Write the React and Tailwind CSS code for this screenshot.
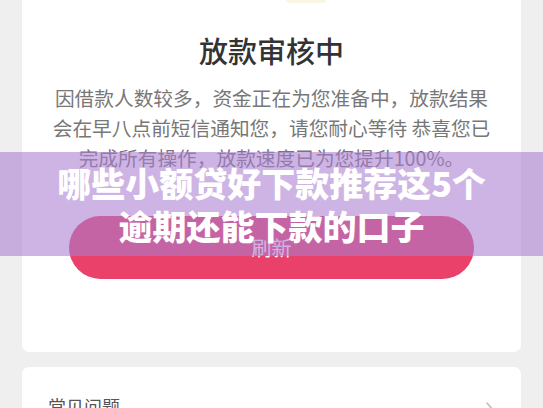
import React from 'react';

const cjk = { fontFamily: '"Noto Sans CJK SC", "Noto Sans", sans-serif' };

function Chevron() {
  return (
    <svg width="12" height="20" viewBox="0 0 12 20" fill="none">
      <polyline points="2,1 10,10 2,19" stroke="#bdbdbd" strokeWidth="1.6" strokeLinecap="round" strokeLinejoin="round" />
    </svg>
  );
}

export default function App() {
  return (
    <div className="relative w-full h-[408px] overflow-hidden bg-[#efefef] px-[22px]" style={cjk}>
      {/* status card */}
      <div className="bg-white rounded-b-[7px] flex flex-col items-center pb-[73px]">
        <div className="ml-[68px] w-[40px] h-[3px] rounded-b-full bg-[#f9f6e6]"></div>
        <h1 className="mt-[29px] text-[29px] leading-[36px] font-medium text-[#333333]">放款审核中</h1>
        <p className="mt-[15px] w-[442px] text-center text-[19.7px] leading-[30px] text-[#777777]">
          因借款人数较多，资金正在为您准备中，放款结果会在早八点前短信通知您，请您耐心等待 恭喜您已完成所有操作，放款速度已为您提升100%。
        </p>
        <button className="mt-[43px] w-[405px] h-[63px] rounded-full bg-[#e9416a] text-white text-[20px]">
          刷新
        </button>
      </div>

      {/* faq card */}
      <div className="mt-[15px] bg-white rounded-[7px] flex items-start justify-between pl-[26px] pr-[24px] pt-[27px] h-[80px]">
        <span className="text-[18px] leading-[24px] text-[#555555]">常见问题</span>
        <div className="mt-[8px]">
          <Chevron />
        </div>
      </div>

      {/* banner overlay */}
      <div className="absolute left-0 right-0 top-[152px] h-[104px] bg-[rgba(168,126,208,0.58)] flex items-center justify-center">
        <div className="text-center text-white font-black text-[34px] leading-[43px]">
          哪些小额贷好下款推荐这5个
          <br />
          逾期还能下款的口子
        </div>
      </div>
    </div>
  );
}
